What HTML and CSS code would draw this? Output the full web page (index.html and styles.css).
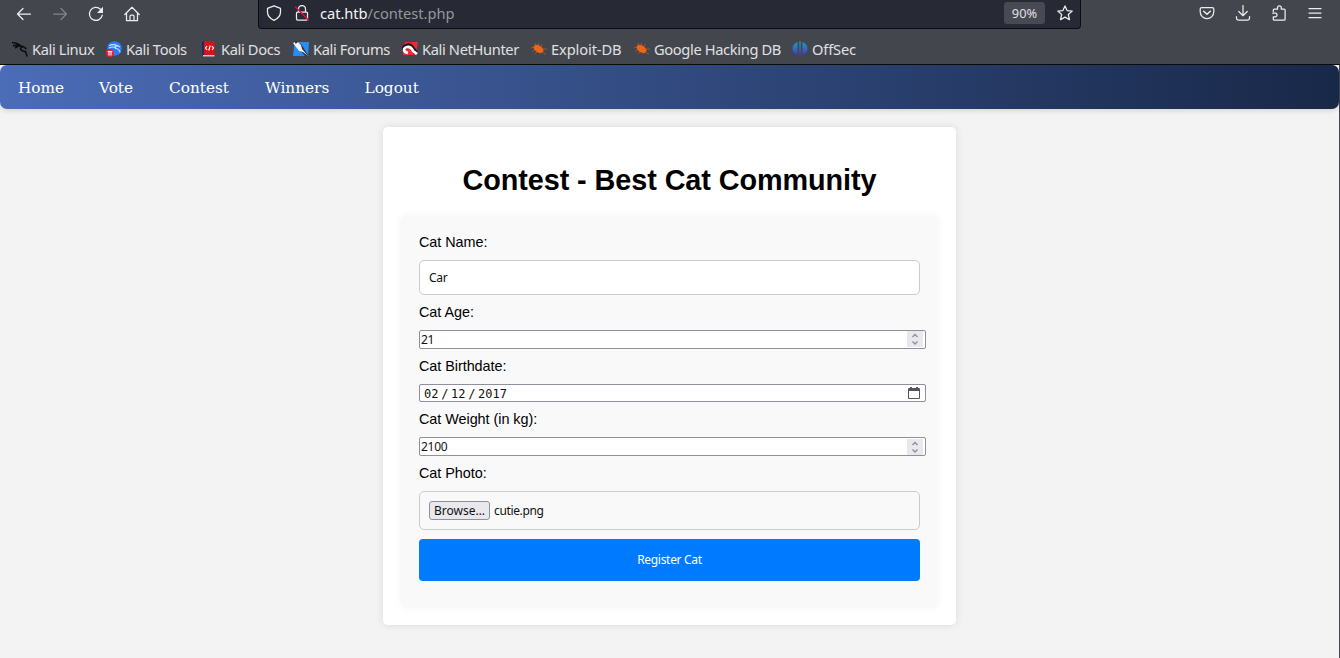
FILE: index.html
```html
<!DOCTYPE html>
<html lang="en">
<head>
<meta charset="utf-8">
<title>Contest - Best Cat Community</title>
<link rel="stylesheet" href="styles.css">
</head>
<body>
<header class="chrome">
  <div class="toolbar">
    <div class="nav-tools">
      <svg class="tool" viewBox="0 0 16 16"><path d="M14.500 8H1.500M7 2.500 1.500 8 7 13.500"/></svg>
      <svg class="tool dim" viewBox="0 0 16 16"><path d="M1.500 8h13M9 2.500 14.500 8 9 13.500"/></svg>
      <svg class="tool" viewBox="0 0 16 16"><path d="M14.300 9.200A6.500 6.500 0 1 1 12.500 3.300"/><path class="solid" d="M15 .8v6.200H9z"/></svg>
      <svg class="tool" viewBox="0 0 16 16"><path d="M.8 8.500 8 1.300l7.200 7.200M2.500 7.200v7.300h11V7.200M6 14.500V10.200q0-1.200 1.200-1.200h1.600q1.200 0 1.200 1.200v4.300"/></svg>
    </div>
    <div class="urlbar">
      <svg class="tool shield" viewBox="0 0 16 16"><path d="M8 .8 14.500 3.300V7c0 4-2.500 6.600-6.500 8.400C4 13.600 1.500 11 1.500 7V3.300z"/></svg>
      <svg class="tool lock" viewBox="0 0 16 16"><path d="M4.500 7V4a3.500 3.500 0 0 1 7 0v3M3.500 7h9q1 0 1 1v6q0 1-1 1h-9q-1 0-1-1V8q0-1 1-1z"/><path class="slash" d="m1.500 2 13 13"/></svg>
      <span class="url">cat.htb<span class="path">/contest.php</span></span>
      <span class="zoom">90%</span>
      <svg class="tool star" viewBox="0 0 16 16"><path d="m8 .9 2.100 4.700 5.100.5-3.900 3.400 1.200 5.200L8 12.100l-4.500 2.600 1.200-5.200L.8 6.100l5.100-.5z"/></svg>
    </div>
    <div class="right-tools">
      <svg class="tool" viewBox="0 0 16 16"><path d="M2.800 2.500h10.400q1.600 0 1.600 1.600v2.700a6.800 6.800 0 0 1-13.600 0V4.100q0-1.600 1.600-1.600z"/><path class="thick" d="m4.700 6.200 3.300 3 3.300-3"/></svg>
      <svg class="tool" viewBox="0 0 16 16"><path d="M8 .5v10M3.800 6.500 8 10.700l4.200-4.200M1.500 11.500v1.800q0 1.700 1.700 1.700h9.600q1.700 0 1.700-1.700v-1.800"/></svg>
      <svg class="tool" viewBox="0 0 16 16"><path d="M2.300 6.500V5.200q0-1 1-1h3.200V2.800a1.900 1.900 0 0 1 3.800 0v1.400h2.800q1 0 1 1v9q0 1-1 1H3.300q-1 0-1-1v-2.400h1.900a1.800 1.800 0 0 0 0-3.600H1.700"/></svg>
      <svg class="tool menu" viewBox="0 0 16 16"><path d="M2 3.500h12M2 8h12M2 12.500h12"/></svg>
    </div>
  </div>
  <nav class="bookmarks">
    <a class="bookmark w94"><svg viewBox="0 0 16 16"><path fill="none" stroke="#0b0b0d" stroke-width="1.500" d="M0 1.500 5 2.500l3.500 2M1 4.800l4-.5 4 .7M3 7l4-2.300 4 .8 3.500 2.300M11 5.500 9 6.300 8.500 8l1.500 1.700 3.500 1 1.700 4.800"/></svg><span>Kali Linux</span></a>
    <a class="bookmark w95"><svg viewBox="0 0 16 16"><circle cx="8.500" cy="7.500" r="7.300" fill="#267dff"/><path fill="none" stroke="#cfe4ff" stroke-width="1.200" d="M3 4.500q5-2 8 .3Q8 5.500 9.500 7.500q4 .2 4.500 4M3 7q4-2 7 0M10 4l4 2"/><circle cx="4" cy="12" r="4" fill="#e8202a"/><path stroke="#fff" stroke-width="1.100" fill="none" d="M1.700 10.500h4.600M3 10.500v4M5 10.500v4"/></svg><span>Kali Tools</span></a>
    <a class="bookmark w92"><svg viewBox="0 0 16 16"><path fill="#202c60" d="M1 .5h3v14H1z"/><path fill="#dd1018" d="M3 .5h10.500v13.500H3z"/><path fill="#d2c4c4" d="M2 14h11.500v1.500H2z"/><path fill="none" stroke="#fff" stroke-width="1.200" d="M6 5 4.500 7 6 9m5-4 1.500 2L11 9M9.200 4.500 7.800 9.500"/></svg><span>Kali Docs</span></a>
    <a class="bookmark w109"><svg viewBox="0 0 16 16"><path fill="#248df8" d="M1.500 1H16l-1 14H0z"/><path fill="#303038" d="m0 1 3-1 5 3 7 11-2 2z"/><path fill="#f7f7f4" d="m0 2 2-1 .5 2L5 1l3 3 1 4 6 7-5-4-4-1-3-4z"/></svg><span>Kali Forums</span></a>
    <a class="bookmark w129"><svg viewBox="0 0 16 16"><path fill="#ef2931" d="M3 1h13l-2 13H1z"/><path fill="none" stroke="#17171c" stroke-width="4.500" d="M1 9C3 4 8 3 10 7l4 5"/><path fill="none" stroke="#fff" stroke-width="2.800" d="M6 12C1 11 1 7 5 6s5 2 6 4l4 3"/></svg><span>Kali NetHunter</span></a>
    <a class="bookmark w103"><svg viewBox="0 0 16 16"><ellipse cx="7.500" cy="8" rx="5.500" ry="3.400" transform="rotate(33 7.500 8)" fill="#f06413"/><path fill="none" stroke="#ad5a35" stroke-width=".8" d="m5 5-1-3m4 3-1-3M3 6 0 7m3 2-2 2m5 0-2 2m6-7 1-3m1 5h4m-4 4 3 1"/></svg><span>Exploit-DB</span></a>
    <a class="bookmark w158"><svg viewBox="0 0 16 16"><ellipse cx="7.500" cy="8" rx="5.500" ry="3.400" transform="rotate(33 7.500 8)" fill="#f06413"/><path fill="none" stroke="#ad5a35" stroke-width=".8" d="m5 5-1-3m4 3-1-3M3 6 0 7m3 2-2 2m5 0-2 2m6-7 1-3m1 5h4m-4 4 3 1"/></svg><span>Google Hacking DB</span></a>
    <a class="bookmark loose"><svg viewBox="0 0 16 16"><defs><linearGradient id="os" x2="0" y2="1"><stop stop-color="#13a5be"/><stop offset="1" stop-color="#5826c4"/></linearGradient></defs><path fill="url(#os)" d="M5.500 1v13Q.5 12 .5 7.500T5.500 1zm1.800-.7h1.400V16H7.300zM10.500 1q5 2 5 6.500t-5 6.500z"/></svg><span>OffSec</span></a>
  </nav>
</header>
<div class="page">
  <nav class="site-nav">
    <a class="s-home">Home</a><a class="s-vote">Vote</a><a class="s-contest">Contest</a><a class="s-winners">Winners</a><a>Logout</a>
  </nav>
  <main class="card">
    <h1>Contest - Best Cat Community</h1>
    <form class="form">
      <label>Cat Name:</label>
      <div class="field text">Car</div>
      <label>Cat Age:</label>
      <div class="field native">21<span class="spin"><svg viewBox="0 0 16 16"><path d="m5.500 6 2.500-2.500L10.500 6m-5 4.500L8 13l2.500-2.500"/></svg></span></div>
      <label>Cat Birthdate:</label>
      <div class="field native date"><span class="date-text">02<i>/</i>12<i>/</i>2017</span><svg class="calendar" viewBox="0 0 12 12"><path fill="#555" d="M2 0h2v1h4V0h2v1h1q1 0 1 1v9q0 1-1 1H1q-1 0-1-1V2q0-1 1-1h1zM1 4v7h10V4z"/></svg></div>
      <label>Cat Weight (in kg):</label>
      <div class="field native">2100<span class="spin low"><svg viewBox="0 0 16 16"><path d="m5.500 6 2.500-2.500L10.500 6m-5 4.500L8 13l2.500-2.500"/></svg></span></div>
      <label>Cat Photo:</label>
      <div class="field file"><span class="browse">Browse…</span><span class="filename">cutie.png</span></div>
      <button type="button" class="submit">Register Cat</button>
    </form>
  </main>
</div>
</body>
</html>
```
FILE: styles.css
```css
* { box-sizing: border-box; }
body {
  margin: 0;
  height: 658px;
  overflow: hidden;
  background: #f3f3f3;
  font-family: "Liberation Sans", Arial, sans-serif;
}
.chrome {
  height: 65px;
  background: #44464d;
  border-bottom: 1px solid #0c0c0d;
  color: #e0e0e2;
  font-family: "Noto Sans", sans-serif;
}
.toolbar { display: flex; height: 32px; align-items: flex-start; }
.nav-tools { display: flex; gap: 20px; width: 258px; padding: 6px 0 0 16px; }
.tool {
  display: block;
  flex: none;
  width: 16px;
  height: 16px;
  fill: none;
  stroke: #ededee;
  stroke-width: 1.25;
  stroke-linecap: round;
  stroke-linejoin: round;
}
.dim { stroke: #828389; }
.solid { fill: #ededee; stroke: none; }
.slash { stroke: #e50b40; stroke-width: 1.4; }
.thick { stroke-width: 1.5; }
.urlbar {
  display: flex;
  align-items: center;
  width: 823px;
  height: 29px;
  padding: 0 7px 2px 7px;
  background: #272934;
  border: 1px solid #0c0c0d;
  border-top: 0;
  border-radius: 0 0 4px 4px;
}
.shield { margin-right: 12px; }
.url { margin-left: 10px; font-size: 14.67px; letter-spacing: -.04px; color: #f5f5f6; line-height: 20px; }
.path { color: #96979c; }
.zoom {
  width: 41px;
  height: 22px;
  margin-left: auto;
  border-radius: 3px;
  background: #474953;
  font-size: 12.8px;
  line-height: 23px;
  text-align: center;
}
.star { margin-left: 12px; }
.right-tools { display: flex; gap: 20px; padding: 5px 0 0 118px; }
.bookmarks { display: flex; height: 32px; padding: 1px 0 0 12px; align-items: center; }
.bookmark { display: flex; align-items: center; gap: 4px; font-size: 14.67px; letter-spacing: -.36px; line-height: 20px; white-space: nowrap; }
.bookmark svg { flex: none; width: 16px; height: 16px; }
.loose { letter-spacing: -.15px; }
.w92 { width: 92px; }
.w94 { width: 94px; }
.w95 { width: 95px; }
.w103 { width: 103px; letter-spacing: -.12px; }
.w109 { width: 109px; }
.w129 { width: 129px; }
.w158 { width: 158px; }
.page { height: 593px; border-right: 1px solid #44464d; background: #f3f3f3; }
.site-nav {
  display: flex;
  height: 44px;
  padding: 2px 0 0 18px;
  align-items: center;
  border-radius: 7px;
  background: linear-gradient(90deg, #4b6cb7, #182848);
  box-shadow: 0 2px 5px rgba(0, 0, 0, .12);
  color: #fff;
  font: 15.3px/20px "DejaVu Serif", serif;
}
.s-home { width: 81px; }
.s-vote { width: 70px; }
.s-contest { width: 96px; }
.s-winners { width: 99.5px; }
.card {
  width: 573px;
  height: 498px;
  margin: 18px auto 0;
  padding: 36px 18px 18px;
  border-radius: 5px;
  background: #fff;
  box-shadow: 0 0 9px rgba(0, 0, 0, .1);
}
h1 { margin: 0 0 18px; font-size: 28.8px; line-height: 35px; letter-spacing: -.07px; text-align: center; }
.form {
  display: flex;
  flex-direction: column;
  height: 391px;
  padding: 18px;
  border-radius: 5px;
  background: #f9f9f9;
  box-shadow: 0 0 9px rgba(0, 0, 0, .05);
}
label { height: 17px; margin-bottom: 9px; font-size: 14.4px; line-height: 17px; letter-spacing: -.04px; }
.field { display: flex; align-items: center; margin-bottom: 9px; font: 12px/16px "Noto Sans", sans-serif; letter-spacing: -.25px; color: #111; }
.text { height: 35px; padding: 0 9px; border: 1px solid #ccc; border-radius: 5px; background: #fff; }
.native {
  width: 507px;
  height: 19px;
  padding: 0 2px 0 1px;
  border: 1px solid #8f8f9d;
  border-radius: 2px;
  background: #fff;
}
.spin { width: 16px; height: 16px; margin: 0 0 1px auto; background: #e9e9ed; }
.low { margin: 1px 0 0 auto; }
.spin svg { display: block; fill: none; stroke: #8f8f9d; stroke-width: 1.4; }
.date { height: 18px; padding: 0 5px 0 4px; }
.date-text { padding-top: 1px; font: 12px/16px "DejaVu Sans Mono", monospace; letter-spacing: 0; }
.date-text i { display: inline-block; width: 12.6px; font-style: normal; text-align: center; }
.calendar { width: 12px; height: 12px; margin: 0 0 1px auto; }
.file { height: 39px; padding: 0 9px; border: 1px solid #ccc; border-radius: 5px; }
.browse {
  width: 61px;
  height: 19px;
  border: 1px solid #8f8f9d;
  border-radius: 3px;
  background: #e9e9ed;
  line-height: 18px;
  letter-spacing: 0;
  text-align: center;
}
.filename { margin-left: 4px; padding-top: 1px; letter-spacing: -.35px; }
.submit {
  height: 42px;
  padding: 0;
  border: 0;
  border-radius: 4px;
  background: #007bff;
  color: #fff;
  font: 12px/18px "Noto Sans", sans-serif;
  letter-spacing: -.3px;
}
```
